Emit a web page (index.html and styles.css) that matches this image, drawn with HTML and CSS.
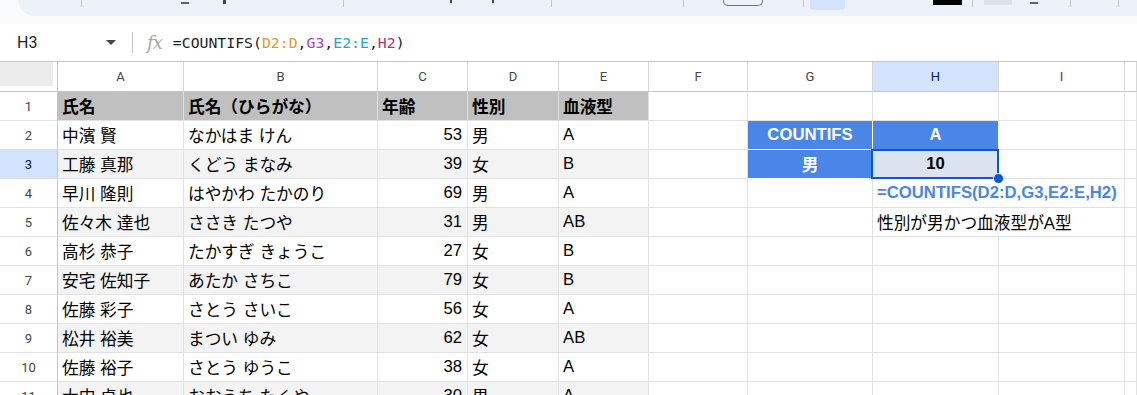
FILE: index.html
```html
<!DOCTYPE html>
<html lang="ja">
<head>
    <meta charset="UTF-8">
    <title>COUNTIFS - スプレッドシート</title>
    <link rel="stylesheet" href="styles.css">
</head>
<body>

<!-- ツールバー（下端のみ見えている） -->
<div class="top">
    <div class="toolbar">
        <span class="tb-sep" style="margin-left: 63px;"></span>
        <span class="tb-dash" style="margin-left: 99px;"></span>
        <span class="tb-mark" style="margin-left: 34px;"></span>
        <span class="tb-sep" style="margin-left: 117px;"></span>
        <span class="tb-tick" style="margin-left: 106px;"></span>
        <span class="tb-tick" style="margin-left: 40px;"></span>
        <span class="tb-sep" style="margin-left: 57px;"></span>
        <span class="tb-sep" style="margin-left: 131px;"></span>
        <span class="tb-box" style="margin-left: 39px;"></span>
        <span class="tb-sep" style="margin-left: 40px;"></span>
        <span class="tb-active" style="margin-left: 6px;"></span>
        <span class="tb-color" style="margin-left: 88px;"></span>
        <span class="tb-sep" style="margin-left: 10px;"></span>
        <span class="tb-fill" style="margin-left: 11px;"></span>
        <span class="tb-dash" style="margin-left: 18px;"></span>
        <span class="tb-sep" style="margin-left: 32px;"></span>
        <span class="tb-sep" style="margin-left: 47px;"></span>
    </div>
</div>

<!-- 数式バー -->
<div class="formula-bar">
    <div class="name-box">
        <span>H3</span>
        <span class="caret"></span>
    </div>
    <span class="fb-sep"></span>
    <span class="fx">fx</span>
    <div class="formula">=COUNTIFS(<span class="ref-d">D2:D</span>,<span class="ref-g">G3</span>,<span class="ref-e">E2:E</span>,<span class="ref-h">H2</span>)</div>
</div>

<!-- シート -->
<div class="sheet">
    <div class="row col-head">
        <div class="corner"><span></span></div>
        <div class="ch">A</div>
        <div class="ch">B</div>
        <div class="ch">C</div>
        <div class="ch">D</div>
        <div class="ch">E</div>
        <div class="ch">F</div>
        <div class="ch">G</div>
        <div class="ch active">H</div>
        <div class="ch">I</div>
        <div class="ch"></div>
    </div>

    <div class="row">
        <div class="rh">1</div>
        <div class="c d hd">氏名</div>
        <div class="c d hd">氏名（ひらがな）</div>
        <div class="c d hd">年齢</div>
        <div class="c d hd">性別</div>
        <div class="c d hd">血液型</div>
        <div class="c"></div>
        <div class="c"></div>
        <div class="c"></div>
        <div class="c"></div>
        <div class="c"></div>
    </div>

    <div class="row">
        <div class="rh">2</div>
        <div class="c d">中濱 賢</div>
        <div class="c d">なかはま けん</div>
        <div class="c d num">53</div>
        <div class="c d">男</div>
        <div class="c d">A</div>
        <div class="c"></div>
        <div class="c blue">COUNTIFS</div>
        <div class="c blue">A</div>
        <div class="c"></div>
        <div class="c"></div>
    </div>

    <div class="row alt">
        <div class="rh active">3</div>
        <div class="c d">工藤 真那</div>
        <div class="c d">くどう まなみ</div>
        <div class="c d num">39</div>
        <div class="c d">女</div>
        <div class="c d">B</div>
        <div class="c"></div>
        <div class="c blue">男</div>
        <div class="c result">10</div>
        <div class="c"></div>
        <div class="c"></div>
    </div>

    <div class="row">
        <div class="rh">4</div>
        <div class="c d">早川 隆則</div>
        <div class="c d">はやかわ たかのり</div>
        <div class="c d num">69</div>
        <div class="c d">男</div>
        <div class="c d">A</div>
        <div class="c"></div>
        <div class="c"></div>
        <div class="c spill formula-text">=COUNTIFS(D2:D,G3,E2:E,H2)</div>
        <div class="c"></div>
        <div class="c"></div>
    </div>

    <div class="row alt">
        <div class="rh">5</div>
        <div class="c d">佐々木 達也</div>
        <div class="c d">ささき たつや</div>
        <div class="c d num">31</div>
        <div class="c d">男</div>
        <div class="c d">AB</div>
        <div class="c"></div>
        <div class="c"></div>
        <div class="c spill">性別が男かつ血液型がA型</div>
        <div class="c"></div>
        <div class="c"></div>
    </div>

    <div class="row">
        <div class="rh">6</div>
        <div class="c d">高杉 恭子</div>
        <div class="c d">たかすぎ きょうこ</div>
        <div class="c d num">27</div>
        <div class="c d">女</div>
        <div class="c d">B</div>
        <div class="c"></div>
        <div class="c"></div>
        <div class="c"></div>
        <div class="c"></div>
        <div class="c"></div>
    </div>

    <div class="row alt">
        <div class="rh">7</div>
        <div class="c d">安宅 佐知子</div>
        <div class="c d">あたか さちこ</div>
        <div class="c d num">79</div>
        <div class="c d">女</div>
        <div class="c d">B</div>
        <div class="c"></div>
        <div class="c"></div>
        <div class="c"></div>
        <div class="c"></div>
        <div class="c"></div>
    </div>

    <div class="row">
        <div class="rh">8</div>
        <div class="c d">佐藤 彩子</div>
        <div class="c d">さとう さいこ</div>
        <div class="c d num">56</div>
        <div class="c d">女</div>
        <div class="c d">A</div>
        <div class="c"></div>
        <div class="c"></div>
        <div class="c"></div>
        <div class="c"></div>
        <div class="c"></div>
    </div>

    <div class="row alt">
        <div class="rh">9</div>
        <div class="c d">松井 裕美</div>
        <div class="c d">まつい ゆみ</div>
        <div class="c d num">62</div>
        <div class="c d">女</div>
        <div class="c d">AB</div>
        <div class="c"></div>
        <div class="c"></div>
        <div class="c"></div>
        <div class="c"></div>
        <div class="c"></div>
    </div>

    <div class="row">
        <div class="rh">10</div>
        <div class="c d">佐藤 裕子</div>
        <div class="c d">さとう ゆうこ</div>
        <div class="c d num">38</div>
        <div class="c d">女</div>
        <div class="c d">A</div>
        <div class="c"></div>
        <div class="c"></div>
        <div class="c"></div>
        <div class="c"></div>
        <div class="c"></div>
    </div>

    <div class="row alt">
        <div class="rh">11</div>
        <div class="c d">大内 卓也</div>
        <div class="c d">おおうち たくや</div>
        <div class="c d num">30</div>
        <div class="c d">男</div>
        <div class="c d">A</div>
        <div class="c"></div>
        <div class="c"></div>
        <div class="c"></div>
        <div class="c"></div>
        <div class="c"></div>
    </div>
</div>

</body>
</html>
```

FILE: styles.css
```css
/* 全体 */
body {
    margin: 0;
    background-color: #f9fbfd;
    font-family: 'Liberation Sans', Arial, 'Noto Sans CJK JP', sans-serif;
    color: #000;
    overflow: hidden;
    height: 395px;
}

/* ツールバー */
.top {
    height: 24px;
}

.toolbar {
    margin-left: 18px;
    height: 16px;
    background-color: #edf2fa;
    border-bottom-left-radius: 16px;
    display: flex;
    align-items: flex-start;
}

.toolbar span {
    flex: none;
    display: block;
}

.tb-sep {
    width: 1px;
    height: 7px;
    background-color: #c7c7c7;
}

.tb-dash {
    width: 8px;
    height: 2px;
    margin-top: 2px;
    background-color: #5f6368;
}

.tb-mark {
    width: 3px;
    height: 4px;
    background-color: #444746;
}

.tb-tick {
    width: 2px;
    height: 3px;
    background-color: #444746;
}

.tb-box {
    width: 38px;
    height: 5px;
    border: 1px solid #747775;
    border-top: none;
    border-radius: 0 0 5px 5px;
}

.tb-active {
    width: 35px;
    height: 10px;
    background-color: #d3e3fd;
    border-radius: 0 0 4px 4px;
}

.tb-color {
    width: 29px;
    height: 5px;
    background-color: #000;
}

.tb-fill {
    width: 28px;
    height: 5px;
    background-color: #dde3ea;
}

/* 数式バー */
.formula-bar {
    height: 37px;
    background-color: #fff;
    border-bottom: 1px solid #c4c7c5;
    display: flex;
    align-items: center;
}

.name-box {
    width: 116px;
    padding-left: 17px;
    box-sizing: border-box;
    display: flex;
    align-items: center;
    font-family: 'Roboto', 'Liberation Sans', sans-serif;
    font-size: 16px;
    color: #1f1f1f;
}

.name-box span:first-child {
    flex: 1;
}

.caret {
    width: 0;
    height: 0;
    border-left: 5px solid transparent;
    border-right: 5px solid transparent;
    border-top: 5px solid #444746;
}

.fb-sep {
    width: 1px;
    height: 21px;
    background-color: #c4c7c5;
    margin-left: 16px;
}

.fx {
    margin-left: 14px;
    font-family: 'DejaVu Serif', serif;
    font-style: italic;
    font-size: 18px;
    color: #a8a8a8;
    letter-spacing: -1px;
}

.formula {
    margin-left: 11px;
    font-family: 'DejaVu Sans Mono', monospace;
    font-size: 14.8px;
    color: #1f1f1f;
}

.ref-d { color: #e69a2e; }
.ref-g { color: #a248b8; }
.ref-e { color: #22a6c3; }
.ref-h { color: #b5336c; }

/* シート */
.sheet {
    background-color: #fff;
}

.row {
    display: grid;
    grid-template-columns: 58px 126px 194px 90px 91px 90px 99px 125px 126px 126px 1fr;
    height: 29px;
}

.row > div {
    box-sizing: border-box;
    border-right: 1px solid #e1e1e1;
    border-bottom: 1px solid #e1e1e1;
    display: flex;
    align-items: center;
    white-space: nowrap;
    min-width: 0;
}

.col-head {
    height: 30px;
}

.col-head > div {
    justify-content: center;
    font-family: 'Roboto', 'Liberation Sans', sans-serif;
    font-size: 13px;
    color: #444746;
    border-color: #d6d6d6;
    border-bottom-color: #c4c7c5;
}

.col-head .ch.active {
    background-color: #d3e3fd;
    color: #041e49;
}

.corner {
    align-items: flex-start !important;
    justify-content: flex-start !important;
    border-right-color: #c4c7c5 !important;
}

.corner span {
    width: 53px;
    height: 24px;
    background-color: #ececec;
}

.rh {
    justify-content: center;
    font-family: 'Roboto', 'Liberation Sans', sans-serif;
    font-size: 13px;
    color: #444746;
    border-right-color: #c4c7c5 !important;
    border-bottom-color: #e1e1e1;
}

.rh.active {
    background-color: #d3e3fd;
    color: #041e49;
}

.c {
    padding: 0 4px;
    font-size: 16.7px;
}

.num {
    justify-content: flex-end;
    padding-right: 5px;
}

.hd {
    background-color: #c0c0c0;
    font-weight: bold;
}

.alt .d {
    background-color: #f3f3f3;
}

.blue {
    background-color: #4a86e8;
    color: #fff;
    font-weight: bold;
    justify-content: center;
    border-color: #fff !important;
}

/* 選択中のセル */
.result {
    position: relative;
    justify-content: center;
    font-weight: bold;
    background-color: #dbe3f1;
}

.result::after {
    content: "";
    position: absolute;
    left: -2px;
    top: -1px;
    right: -1px;
    bottom: -1px;
    border: 2px solid #0b57d0;
}

.result::before {
    content: "";
    position: absolute;
    right: -6px;
    bottom: -6px;
    width: 9px;
    height: 9px;
    border-radius: 50%;
    background-color: #0b57d0;
    border: 1px solid #fff;
    z-index: 2;
}

.spill {
    overflow: visible;
    border-right-color: transparent !important;
    position: relative;
    z-index: 1;
}

.formula-text {
    color: #4a86e8;
    font-weight: bold;
}
```
